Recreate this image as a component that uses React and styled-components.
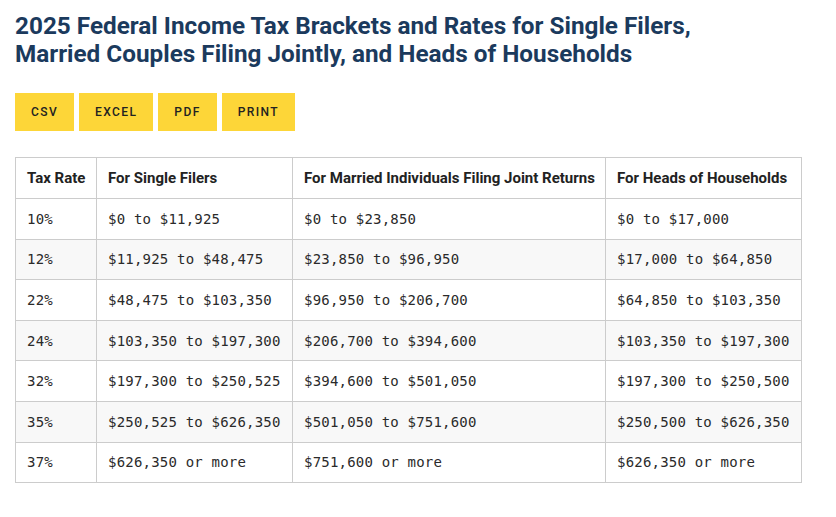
import React from 'react';
import styled, { createGlobalStyle } from 'styled-components';

const GlobalStyle = createGlobalStyle`
  body {
    margin: 0;
    background: #ffffff;
    font-family: Roboto, "Liberation Sans", sans-serif;
    color: #222222;
  }
`;

const Page = styled.div`
  padding: 12px 15px 20px 15px;
`;

const Title = styled.h2`
  margin: 0;
  font-size: 24.3px;
  line-height: 28px;
  font-weight: 700;
  color: #1b3a5d;
  max-width: 700px;
`;

const Toolbar = styled.div`
  display: flex;
  gap: 5px;
  margin-top: 25px;
`;

const Button = styled.button`
  height: 38px;
  padding: 0 16px;
  border: none;
  background: #fdd638;
  color: #222222;
  font-family: Roboto, "Liberation Sans", sans-serif;
  font-size: 12px;
  font-weight: 500;
  letter-spacing: 1.4px;
  cursor: pointer;
`;

const Table = styled.table`
  margin-top: 26px;
  border-collapse: collapse;
  width: 787px;
  table-layout: fixed;
`;

const HeadCell = styled.th`
  height: 40px;
  padding: 0 11px;
  border: 1px solid #cccccc;
  text-align: left;
  font-size: 15px;
  font-weight: 700;
  color: #222222;
  white-space: nowrap;
`;

const Row = styled.tr`
  background: ${(p) => (p.$alt ? '#f8f8f8' : '#ffffff')};
`;

const Cell = styled.td`
  height: 39.6px;
  padding: 0 11px;
  border: 1px solid #cccccc;
  font-family: "DejaVu Sans Mono", "Liberation Mono", monospace;
  font-size: 14px;
  letter-spacing: 0.2px;
  color: #2a2a2a;
  white-space: nowrap;
`;

const columns = [
  { label: 'Tax Rate', width: 81 },
  { label: 'For Single Filers', width: 196 },
  { label: 'For Married Individuals Filing Joint Returns', width: 313 },
  { label: 'For Heads of Households', width: 196 },
];

const rows = [
  ['10%', '$0 to $11,925', '$0 to $23,850', '$0 to $17,000'],
  ['12%', '$11,925 to $48,475', '$23,850 to $96,950', '$17,000 to $64,850'],
  ['22%', '$48,475 to $103,350', '$96,950 to $206,700', '$64,850 to $103,350'],
  ['24%', '$103,350 to $197,300', '$206,700 to $394,600', '$103,350 to $197,300'],
  ['32%', '$197,300 to $250,525', '$394,600 to $501,050', '$197,300 to $250,500'],
  ['35%', '$250,525 to $626,350', '$501,050 to $751,600', '$250,500 to $626,350'],
  ['37%', '$626,350 or more', '$751,600 or more', '$626,350 or more'],
];

const buttons = ['CSV', 'EXCEL', 'PDF', 'PRINT'];

export default function App() {
  return (
    <>
      <GlobalStyle />
      <Page>
        <Title>
          2025 Federal Income Tax Brackets and Rates for Single Filers, Married Couples Filing Jointly, and Heads of
          Households
        </Title>
        <Toolbar>
          {buttons.map((b) => (
            <Button key={b}>{b}</Button>
          ))}
        </Toolbar>
        <Table>
          <colgroup>
            {columns.map((c) => (
              <col key={c.label} style={{ width: c.width }} />
            ))}
          </colgroup>
          <thead>
            <tr>
              {columns.map((c) => (
                <HeadCell key={c.label}>{c.label}</HeadCell>
              ))}
            </tr>
          </thead>
          <tbody>
            {rows.map((r, i) => (
              <Row key={r[0]} $alt={i % 2 === 1}>
                {r.map((v, j) => (
                  <Cell key={j}>{v}</Cell>
                ))}
              </Row>
            ))}
          </tbody>
        </Table>
      </Page>
    </>
  );
}
